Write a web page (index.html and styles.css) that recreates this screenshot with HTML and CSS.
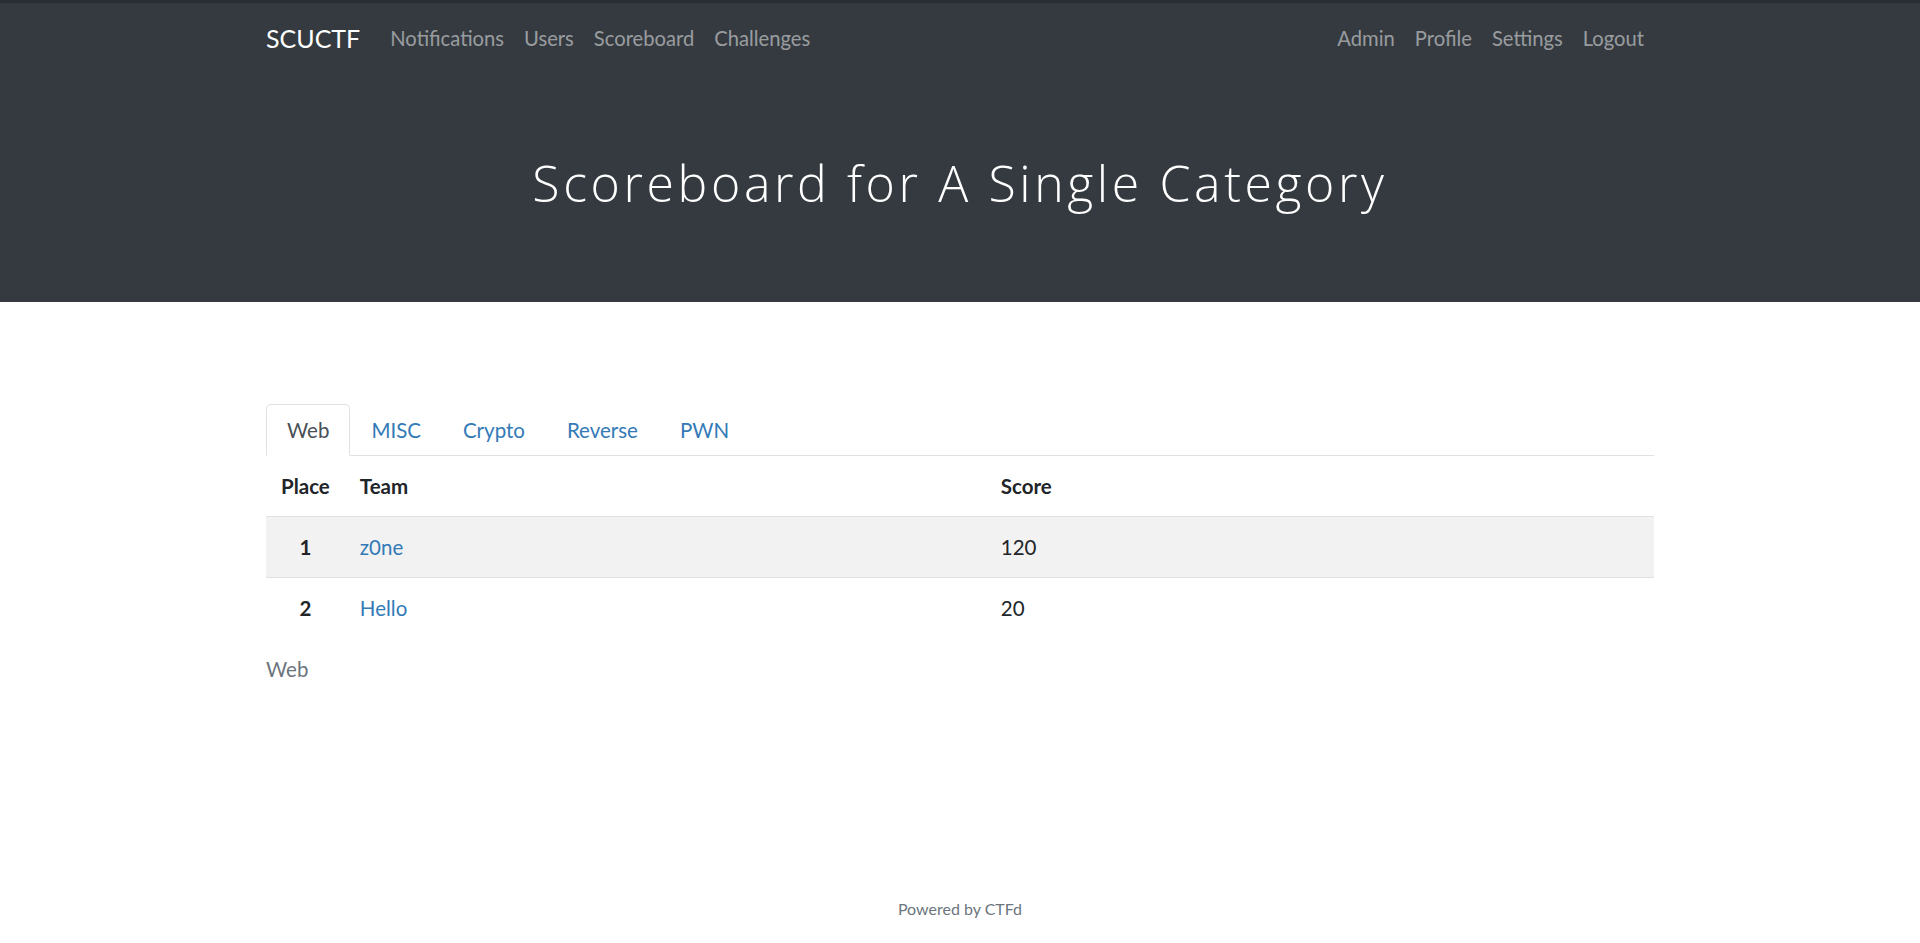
FILE: index.html
```html
<!DOCTYPE html>
<html lang="en">
<head>
<meta charset="utf-8">
<title>Scoreboard for A Single Category</title>
<link rel="stylesheet" href="styles.css">
</head>
<body>
<nav class="navbar">
  <div class="container nav-inner">
    <a class="brand" href="#">SCUCTF</a>
    <ul class="nav-links">
      <li><a href="#">Notifications</a></li>
      <li><a href="#">Users</a></li>
      <li><a href="#">Scoreboard</a></li>
      <li><a href="#">Challenges</a></li>
    </ul>
    <ul class="nav-links nav-right">
      <li><a href="#">Admin</a></li>
      <li><a href="#">Profile</a></li>
      <li><a href="#">Settings</a></li>
      <li><a href="#">Logout</a></li>
    </ul>
  </div>
</nav>
<header class="jumbotron">
  <h1>Scoreboard for A Single Category</h1>
</header>
<main class="container main">
  <ul class="tabs">
    <li><a class="tab active" href="#">Web</a></li>
    <li><a class="tab" href="#">MISC</a></li>
    <li><a class="tab" href="#">Crypto</a></li>
    <li><a class="tab" href="#">Reverse</a></li>
    <li><a class="tab" href="#">PWN</a></li>
  </ul>
  <table class="board">
    <thead>
      <tr>
        <th class="col-place">Place</th>
        <th class="col-team">Team</th>
        <th>Score</th>
      </tr>
    </thead>
    <tbody>
      <tr class="striped">
        <th class="col-place">1</th>
        <td><a href="#">z0ne</a></td>
        <td>120</td>
      </tr>
      <tr>
        <th class="col-place">2</th>
        <td><a href="#">Hello</a></td>
        <td>20</td>
      </tr>
    </tbody>
  </table>
  <p class="muted">Web</p>
</main>
<footer class="footer">
  <a href="#">Powered by CTFd</a>
</footer>
</body>
</html>
```
FILE: styles.css
```css
* { box-sizing: border-box; }
html, body { height: 100%; }
body {
  margin: 0;
  font-family: Lato, "Liberation Sans", sans-serif;
  font-size: 20.5px;
  line-height: 30px;
  color: #212529;
  background: #fff;
  display: flex;
  flex-direction: column;
  min-height: 100vh;
}
a { text-decoration: none; color: #337ab7; }
.container {
  width: 1388px;
  margin: 0 auto;
}
.navbar {
  background: #343a40;
  border-top: 3px solid #2a2d31;
}
.nav-inner {
  display: flex;
  align-items: center;
  height: 70px;
}
.brand {
  color: #fff;
  font-size: 25px;
  line-height: 1;
  margin-right: 20px;
  padding: 6px 0;
}
.nav-links {
  display: flex;
  list-style: none;
  margin: 0;
  padding: 0;
  font-size: 20.2px;
}
.nav-links a {
  display: block;
  padding: 10px 10px;
  color: rgba(255, 255, 255, 0.5);
  line-height: 24px;
}
.nav-right { margin-left: auto; }
.jumbotron {
  background: #343a40;
  text-align: center;
  padding: 80px 40px 79px;
}
.jumbotron h1 {
  margin: 0 0 10px;
  font-family: "Open Sans", Lato, sans-serif;
  font-weight: 300;
  font-size: 50px;
  line-height: 60px;
  letter-spacing: 3.6px;
  color: #fff;
}
.main { padding-top: 102px; }
.tabs {
  display: flex;
  list-style: none;
  margin: 0;
  padding: 0;
  border-bottom: 1px solid #dee2e6;
}
.tab {
  display: block;
  padding: 10px 20px;
  line-height: 30px;
  border: 1px solid transparent;
  border-radius: 5px 5px 0 0;
  margin-bottom: -1px;
  color: #337ab7;
}
.tab.active {
  color: #495057;
  background: #fff;
  border-color: #dee2e6 #dee2e6 #fff;
}
.board {
  width: 100%;
  border-collapse: collapse;
  margin-bottom: 16px;
}
.board th, .board td {
  padding: 15px;
  line-height: 30px;
  text-align: left;
  vertical-align: top;
}
.board tbody th, .board tbody td { border-top: 1px solid #dee2e6; }
.board th { font-weight: 700; }
.board .col-place { width: 78px; text-align: center; }
.board .col-team { width: 641px; }
.striped { background: #f2f2f2; }
.muted {
  margin: 0;
  color: #6c757d;
  line-height: 30px;
}
.footer {
  margin-top: auto;
  text-align: center;
  padding-bottom: 21px;
  font-size: 16px;
  line-height: 26px;
}
.footer a { color: #6c757d; }
```
